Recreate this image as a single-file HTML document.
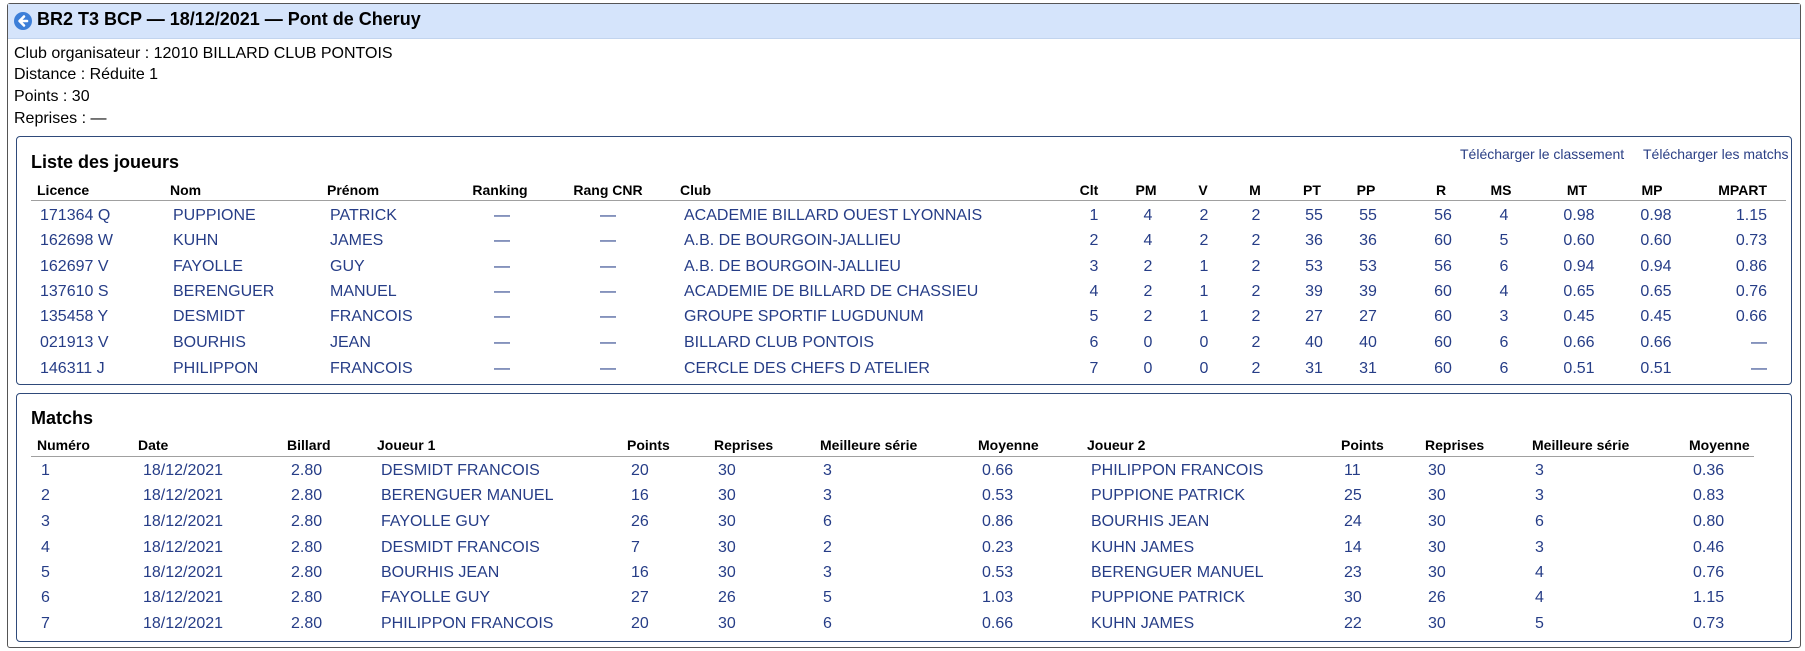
<!DOCTYPE html>
<html><head><meta charset="utf-8"><style>
*{margin:0;padding:0;box-sizing:border-box}
body{width:1805px;height:651px;background:#fff;font-family:"Liberation Sans",Arial,sans-serif;position:relative;overflow:hidden;color:#000}
.outer{position:absolute;left:7px;top:3px;width:1794px;height:645px;border:1px solid #555;border-radius:3px}
.hdr{position:absolute;left:8px;top:4px;width:1792px;height:35px;background:#d5e4fb;border-bottom:1px solid #c2d4ee}
.title{position:absolute;left:37px;top:9px;font-weight:bold;font-size:18px;white-space:nowrap}
.icon{position:absolute;left:14px;top:12px;width:18px;height:18px}
.info{position:absolute;left:14px;font-size:16px;white-space:nowrap}
.panel{position:absolute;left:16px;width:1776px;border:1px solid #2f4a7a;border-radius:4px}
.ptitle{position:absolute;left:31px;font-weight:bold;font-size:18px}
.dl{position:absolute;top:146px;font-size:14px;color:#2a3f85;white-space:nowrap}
.c{position:absolute;white-space:nowrap;line-height:25px;height:25px}
.h{font-weight:bold;font-size:14px;color:#000}
.d{font-size:16px;color:#263d87}
.m{transform:translateX(-50%)}
.line{position:absolute;height:1px;background:#a0a0a0}
</style></head><body>
<div class="outer"></div>
<div class="hdr"></div>
<svg class="icon" viewBox="0 0 18 18"><circle cx="9" cy="9" r="9" fill="#3d7fd8"/><path d="M10 4.5L5.5 9L10 13.5M6 9H13" stroke="#fff" stroke-width="2.6" fill="none" stroke-linecap="round" stroke-linejoin="round"/></svg>
<div class="title">BR2 T3 BCP — 18/12/2021 — Pont de Cheruy</div>
<div class="info" style="top:45px">Club organisateur : 12010 BILLARD CLUB PONTOIS</div>
<div class="info" style="top:66px">Distance : Réduite 1</div>
<div class="info" style="top:88px">Points : 30</div>
<div class="info" style="top:110px">Reprises : —</div>

<div class="panel" style="top:136px;height:249px"></div>
<div class="ptitle" style="top:152px">Liste des joueurs</div>
<div class="dl" style="left:1460px">Télécharger le classement</div>
<div class="dl" style="left:1643px">Télécharger les matchs</div>
<div class="line" style="left:31px;width:1755px;top:200px"></div>

<div class="panel" style="top:393px;height:249px"></div>
<div class="ptitle" style="top:408px">Matchs</div>
<div class="line" style="left:31px;width:1723px;top:456px"></div>

<div id="t"></div>
<script>
var o='';
function L(x,y,t,cls){o+='<div class="c '+cls+'" style="left:'+x+'px;top:'+(y-12.5)+'px">'+t+'</div>';}
function C(x,y,t,cls){o+='<div class="c m '+cls+'" style="left:'+x+'px;top:'+(y-12.5)+'px">'+t+'</div>';}
function R(x,y,t,cls){o+='<div class="c '+cls+'" style="right:'+(1805-x)+'px;top:'+(y-12.5)+'px">'+t+'</div>';}
// players
var hy=190;
L(37,hy,'Licence','h');L(170,hy,'Nom','h');L(327,hy,'Prénom','h');C(500,hy,'Ranking','h');C(608,hy,'Rang CNR','h');L(680,hy,'Club','h');
var cc=[['Clt',1089],['PM',1146],['V',1203],['M',1255],['PT',1312],['PP',1366],['R',1441],['MS',1501],['MT',1577],['MP',1652]];
cc.forEach(function(c){C(c[1],hy,c[0],'h');});
R(1767,hy,'MPART','h');
var P=[['171364 Q','PUPPIONE','PATRICK','ACADEMIE BILLARD OUEST LYONNAIS',1,4,2,2,55,55,56,4,'0.98','0.98','1.15'],
['162698 W','KUHN','JAMES','A.B. DE BOURGOIN-JALLIEU',2,4,2,2,36,36,60,5,'0.60','0.60','0.73'],
['162697 V','FAYOLLE','GUY','A.B. DE BOURGOIN-JALLIEU',3,2,1,2,53,53,56,6,'0.94','0.94','0.86'],
['137610 S','BERENGUER','MANUEL','ACADEMIE DE BILLARD DE CHASSIEU',4,2,1,2,39,39,60,4,'0.65','0.65','0.76'],
['135458 Y','DESMIDT','FRANCOIS','GROUPE SPORTIF LUGDUNUM',5,2,1,2,27,27,60,3,'0.45','0.45','0.66'],
['021913 V','BOURHIS','JEAN','BILLARD CLUB PONTOIS',6,0,0,2,40,40,60,6,'0.66','0.66','—'],
['146311 J','PHILIPPON','FRANCOIS','CERCLE DES CHEFS D ATELIER',7,0,0,2,31,31,60,6,'0.51','0.51','—']];
var py=[215,240,266,291,316,342,368];
P.forEach(function(r,i){var y=py[i];
L(40,y,r[0],'d');L(173,y,r[1],'d');L(330,y,r[2],'d');C(502,y,'—','d');C(608,y,'—','d');L(684,y,r[3],'d');
var xs=[1094,1148,1204,1256,1314,1368,1443,1504,1579,1656];
for(var k=0;k<10;k++)C(xs[k],y,r[4+k],'d');
R(1767,y,r[14],'d');});
// matches
hy=445;
var mh=[['Numéro',37],['Date',138],['Billard',287],['Joueur 1',377],['Points',627],['Reprises',714],['Meilleure série',820],['Moyenne',978],['Joueur 2',1087],['Points',1341],['Reprises',1425],['Meilleure série',1532],['Moyenne',1689]];
mh.forEach(function(c){L(c[1],hy,c[0],'h');});
var mx=[41,143,291,381,631,718,823,982,1091,1344,1428,1535,1693];
var M=[[1,'18/12/2021','2.80','DESMIDT FRANCOIS',20,30,3,'0.66','PHILIPPON FRANCOIS',11,30,3,'0.36'],
[2,'18/12/2021','2.80','BERENGUER MANUEL',16,30,3,'0.53','PUPPIONE PATRICK',25,30,3,'0.83'],
[3,'18/12/2021','2.80','FAYOLLE GUY',26,30,6,'0.86','BOURHIS JEAN',24,30,6,'0.80'],
[4,'18/12/2021','2.80','DESMIDT FRANCOIS',7,30,2,'0.23','KUHN JAMES',14,30,3,'0.46'],
[5,'18/12/2021','2.80','BOURHIS JEAN',16,30,3,'0.53','BERENGUER MANUEL',23,30,4,'0.76'],
[6,'18/12/2021','2.80','FAYOLLE GUY',27,26,5,'1.03','PUPPIONE PATRICK',30,26,4,'1.15'],
[7,'18/12/2021','2.80','PHILIPPON FRANCOIS',20,30,6,'0.66','KUHN JAMES',22,30,5,'0.73']];
var my=[470,495,521,547,572,597,623];
M.forEach(function(r,i){for(var k=0;k<13;k++)L(mx[k],my[i],r[k],'d');});
document.getElementById('t').innerHTML=o;
</script>
</body></html>
